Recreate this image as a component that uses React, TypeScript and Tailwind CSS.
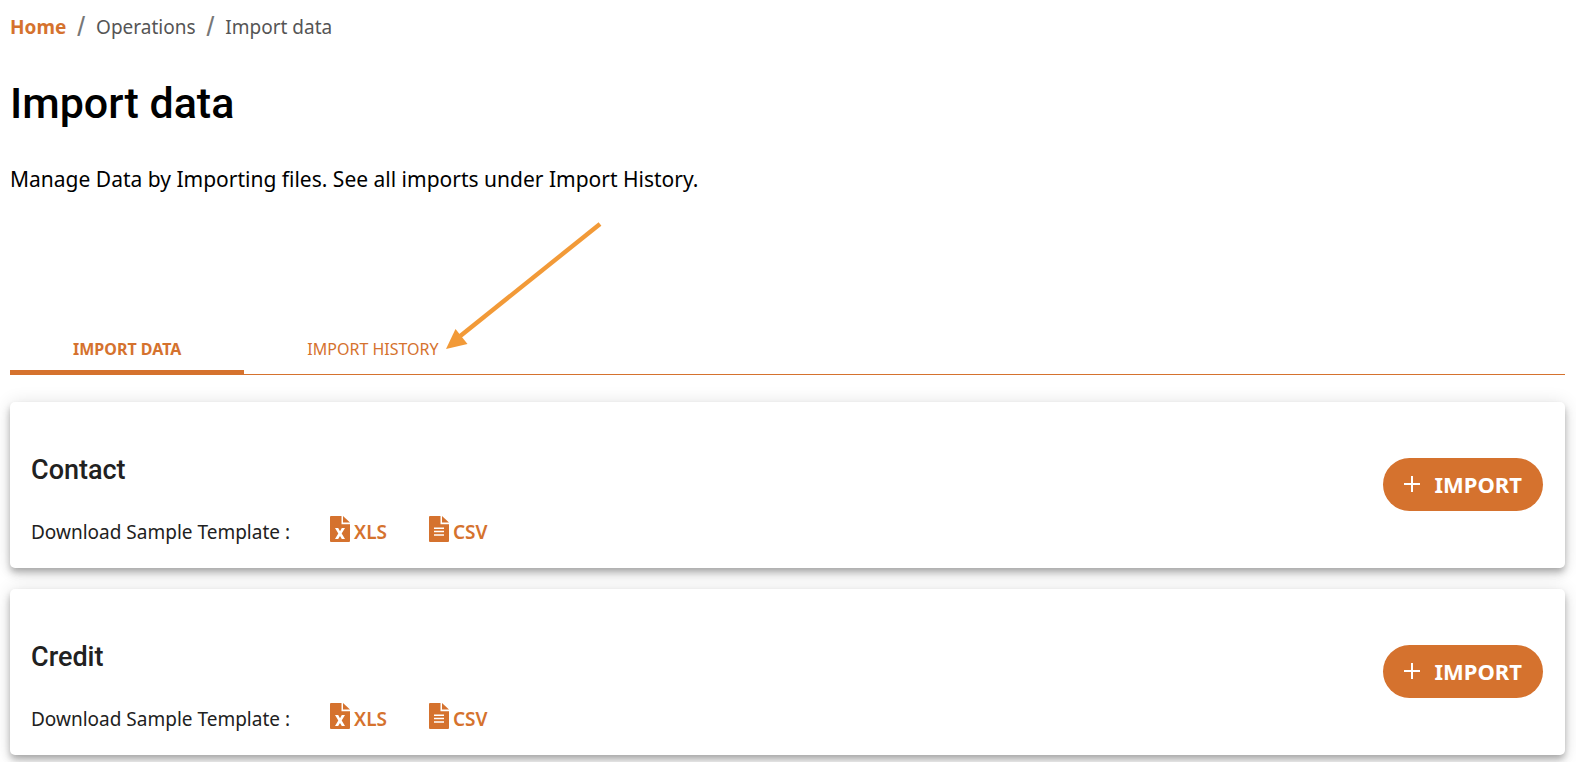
import React, { useState } from 'react';

const templates = [
  { id: 'contact', title: 'Contact' },
  { id: 'credit', title: 'Credit' },
];

const tabs = [
  { id: 'data', label: 'Import data' },
  { id: 'history', label: 'Import history' },
];

const XlsIcon = () => (
  <svg width="20" height="26" viewBox="0 0 20 26" fill="none" aria-hidden="true">
    <path d="M1 0H11.5V8.2H20V25a1 1 0 0 1-1 1H1a1 1 0 0 1-1-1V1a1 1 0 0 1 1-1Z" fill="#d5722e" />
    <path d="M13 0L20 6.4H13Z" fill="#d5722e" />
    <path d="M5 12H8.2L10 15.3L11.8 12H15L11.7 17.6L15 23H11.8L10 19.9L8.2 23H5L8.3 17.6Z" fill="#fff" />
  </svg>
);

const CsvIcon = () => (
  <svg width="20" height="26" viewBox="0 0 20 26" fill="none" aria-hidden="true">
    <path d="M1 0H11.5V8.2H20V25a1 1 0 0 1-1 1H1a1 1 0 0 1-1-1V1a1 1 0 0 1 1-1Z" fill="#d5722e" />
    <path d="M13 0L20 6.4H13Z" fill="#d5722e" />
    <path d="M5 12.2H15M5 15.6H15M5 19H15" stroke="#fff" strokeWidth="1.5" />
  </svg>
);

const PlusIcon = () => (
  <svg width="16" height="16" viewBox="0 0 16 16" fill="none" aria-hidden="true">
    <path d="M8 0V16M0 8H16" stroke="#fff" strokeWidth="2" />
  </svg>
);

const Slash = () => (
  <span className="font-['Liberation_Sans',sans-serif] text-[28px] leading-[30px] text-[#777]">/</span>
);

// Callout pointing at the history tab
const Arrow = () => (
  <svg
    className="absolute bottom-6 left-full -ml-[63px] pointer-events-none"
    width="166"
    height="130"
    viewBox="0 0 166 130"
    fill="none"
    aria-hidden="true"
  >
    <path d="M161 4L20 117" stroke="#f29a38" strokeWidth="4.4" />
    <path d="M7 129L16.5 109L28.5 124Z" fill="#f29a38" />
  </svg>
);

const TemplateCard = ({ title }: { title: string }) => (
  <section className="flex items-center justify-between rounded-[5px] bg-white pt-[52px] pr-[22px] pb-5 pl-[21px] shadow-[0_4px_6px_-1px_rgba(0,0,0,0.2),0_6px_10px_rgba(0,0,0,0.14),0_1px_18px_rgba(0,0,0,0.12)]">
    <div>
      <h2 className="font-['Roboto',sans-serif] text-[27px] leading-8 font-medium text-[#212121]">{title}</h2>
      <div className="mt-[30px] flex h-8 items-center text-[19px] leading-8">
        <span>Download Sample Template :</span>
        <a href="#xls" className="ml-10 flex items-center gap-1 font-semibold text-[#d5722e]">
          <span className="pb-1.5"><XlsIcon /></span>
          XLS
        </a>
        <a href="#csv" className="ml-[42px] flex items-center gap-1 font-semibold text-[#d5722e]">
          <span className="pb-1.5"><CsvIcon /></span>
          CSV
        </a>
      </div>
    </div>
    <button
      type="button"
      className="mb-[34px] flex h-[53px] items-center gap-[15px] rounded-full bg-[#d5722e] px-[21px] text-[22px] font-bold text-white uppercase"
    >
      <PlusIcon />
      Import
    </button>
  </section>
);

export default function App() {
  const [active, setActive] = useState('data');

  return (
    <main className="bg-white pt-3 pr-[11px] pb-3 pl-[10px] font-['Noto_Sans',sans-serif] text-[#212121]">
      <nav aria-label="Breadcrumb" className="flex items-center gap-[11px] text-[19px] leading-[30px] text-[#555]">
        <a href="#home" className="font-bold text-[#d5722e]">Home</a>
        <Slash />
        <span>Operations</span>
        <Slash />
        <span>Import data</span>
      </nav>

      <h1 className="mt-9 font-['Roboto',sans-serif] text-[43px] leading-[50px] font-medium text-black">
        Import data
      </h1>
      <p className="mt-9 text-[21px] leading-[30px] text-black">
        Manage Data by Importing files. See all imports under Import History.
      </p>

      <div role="tablist" className="mt-[132px] flex border-b border-[#d5722e]">
        {tabs.map((tab) => (
          <div key={tab.id} className="relative">
            <button
              type="button"
              role="tab"
              aria-selected={active === tab.id}
              onClick={() => setActive(tab.id)}
              className={`h-12 px-[63px] pt-0.5 text-base uppercase text-[#d5722e] ${
                active === tab.id ? 'border-b-4 border-[#d5722e] font-bold' : 'border-b-4 border-transparent'
              }`}
            >
              {tab.label}
            </button>
            {tab.id === 'history' && <Arrow />}
          </div>
        ))}
      </div>

      <div className="isolate mt-[27px] flex flex-col gap-[21px]">
        {templates.map((template) => (
          <TemplateCard key={template.id} title={template.title} />
        ))}
      </div>
    </main>
  );
}
